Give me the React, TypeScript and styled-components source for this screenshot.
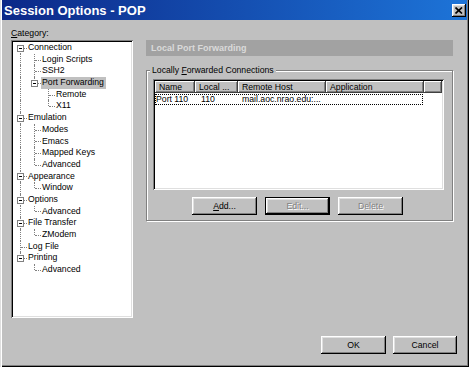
import React from 'react';
import styled, { createGlobalStyle, css } from 'styled-components';

const GlobalStyle = createGlobalStyle`
  html, body {
    margin: 0;
    padding: 0;
    background: #c0c0c0;
  }
  body {
    font-family: "Liberation Sans", Arial, sans-serif;
    font-size: 8.7px;
    color: #000;
  }
`;

const raised = css`
  box-shadow: inset -1px -1px 0 #000, inset 1px 1px 0 #fff,
    inset -2px -2px 0 #808080, inset 2px 2px 0 #dfdfdf;
`;

const sunken = css`
  box-shadow: inset 1px 1px 0 #808080, inset -1px -1px 0 #fff,
    inset 2px 2px 0 #000, inset -2px -2px 0 #dfdfdf;
`;

const Window = styled.div`
    width: 469px;
    height: 367px;
    box-sizing: border-box;
    padding: 0 2px 2px 2px;
    display: flex;
    flex-direction: column;
    background: #c0c0c0;
    box-shadow: inset 1px 0 0 #dfdfdf, inset 2px 0 0 #fff,
        inset -1px -1px 0 #000, inset -2px -2px 0 #808080;
    overflow: hidden;
`;

const TitleBar = styled.div`
    height: 20px;
    display: flex;
    align-items: center;
    padding: 0 1px 0 2px;
    background: linear-gradient(to right, #0c2888, #1d74d8);
    color: #fff;
    font-size: 13px;
    font-weight: bold;
`;

const CloseButton = styled.div`
    margin-left: auto;
    width: 14px;
    height: 13px;
    background: #c0c0c0;
    display: flex;
    align-items: center;
    justify-content: center;
    ${raised};
`;

const Main = styled.div`
    display: flex;
    padding: 6px 0 0 9px;
`;

const LeftCol = styled.div`
    width: 122px;
    display: flex;
    flex-direction: column;
`;

const FieldLabel = styled.div`
    height: 14px;
    line-height: 14px;
`;

const Tree = styled.div`
    height: 278px;
    box-sizing: border-box;
    padding: 2px;
    background: #fff;
    ${sunken};
`;

const TreeRow = styled.div`
    display: flex;
    height: 11.7px;
    line-height: 11.7px;
    white-space: nowrap;
`;

const Guide = styled.div<{ $line: boolean }>`
    position: relative;
    width: 14px;
    flex: none;
    ${p => p.$line && css`
        &::before {
            content: '';
            position: absolute;
            left: 7px;
            top: 0;
            bottom: 0;
            border-left: 1px dotted #808080;
        }
    `}
`;

const Connector = styled.div<{ $up: boolean; $down: boolean }>`
    position: relative;
    width: 14px;
    flex: none;
    &::before {
        content: '';
        position: absolute;
        left: 7px;
        top: ${p => (p.$up ? '0' : '50%')};
        bottom: ${p => (p.$down ? '0' : '50%')};
        border-left: 1px dotted #808080;
    }
    &::after {
        content: '';
        position: absolute;
        left: 8px;
        right: 0;
        top: 50%;
        border-top: 1px dotted #808080;
    }
`;

const Expander = styled.div`
    position: absolute;
    z-index: 1;
    left: 4px;
    top: calc(50% - 3px);
    width: 7px;
    height: 7px;
    box-sizing: border-box;
    border: 1px solid #808080;
    background: #fff;
    &::after {
        content: '';
        position: absolute;
        left: 1px;
        top: 2px;
        width: 3px;
        border-top: 1px solid #000;
    }
`;

const TreeLabel = styled.span<{ $selected?: boolean }>`
    padding: 0 2px 0 1px;
    background: ${p => (p.$selected ? '#c0c0c0' : 'transparent')};
`;

const RightCol = styled.div`
    width: 307px;
    margin-left: 13px;
    padding-top: 14px;
`;

const PanelHeader = styled.div`
    height: 16px;
    line-height: 16px;
    padding-left: 5px;
    background: #a2a2a2;
    color: #dadada;
    font-size: 9px;
    font-weight: bold;
`;

const Group = styled.fieldset`
    margin: 8px 0 0 0;
    padding: 3px 8px 5px 6px;
    min-width: 0;
    border: 1px solid #808080;
    box-shadow: inset 1px 1px 0 #fff, 1px 1px 0 #fff;
`;

const Legend = styled.legend`
    padding: 0 2px;
    margin-left: -3px;
    line-height: 12px;
    background: #c0c0c0;
`;

const ListView = styled.div`
    height: 111px;
    box-sizing: border-box;
    padding: 2px;
    background: #fff;
    display: flex;
    flex-direction: column;
    ${sunken};
`;

const ListHeader = styled.div`
    display: flex;
    height: 12px;
    flex: none;
`;

const HeaderCell = styled.div<{ $w?: number }>`
    ${p => (p.$w ? `width: ${p.$w}px; flex: none;` : 'flex: 1;')}
    box-sizing: border-box;
    padding-left: 4px;
    line-height: 12px;
    background: #c0c0c0;
    white-space: nowrap;
    overflow: hidden;
    box-shadow: inset -1px -1px 0 #404040, inset 1px 1px 0 #fff,
        inset -2px -2px 0 #808080;
`;

const ListRow = styled.div`
    display: flex;
    width: 268px;
    height: 11px;
    line-height: 11px;
    margin: 1px 0 0 0;
    outline: 1px dotted #000;
    outline-offset: -1px;
`;

const RowCell = styled.div<{ $w: number; $pad: number }>`
    width: ${p => p.$w}px;
    padding-left: ${p => p.$pad}px;
    box-sizing: border-box;
    white-space: nowrap;
    overflow: hidden;
`;

const ButtonRow = styled.div`
    display: flex;
    justify-content: center;
    gap: 8px;
    margin-top: 7px;
    padding-right: 2px;
`;

const Button = styled.button<{ $default?: boolean }>`
    width: 65px;
    height: 18px;
    padding: 0;
    border: ${p => (p.$default ? '1px solid #000' : 'none')};
    background: #c0c0c0;
    font-family: inherit;
    font-size: 8.7px;
    color: #000;
    ${raised};
    &:disabled {
        color: #808080;
        text-shadow: 1px 1px 0 #fff;
    }
`;

const Footer = styled.div`
    flex: 1;
    display: flex;
    justify-content: flex-end;
    align-items: flex-end;
    gap: 7px;
    padding: 0 10px 11px 0;
`;

type Node = { label: string; selected?: boolean; children?: Node[] };

const tree: Node[] = [
    {
        label: 'Connection',
        children: [
            { label: 'Login Scripts' },
            { label: 'SSH2' },
            { label: 'Port Forwarding', selected: true, children: [{ label: 'Remote' }, { label: 'X11' }] },
        ],
    },
    { label: 'Emulation', children: [{ label: 'Modes' }, { label: 'Emacs' }, { label: 'Mapped Keys' }, { label: 'Advanced' }] },
    { label: 'Appearance', children: [{ label: 'Window' }] },
    { label: 'Options', children: [{ label: 'Advanced' }] },
    { label: 'File Transfer', children: [{ label: 'ZModem' }] },
    { label: 'Log File' },
    { label: 'Printing', children: [{ label: 'Advanced' }] },
];

const renderTree = (nodes: Node[], guides: boolean[], out: React.ReactNode[], root: boolean) => {
    nodes.forEach((n, i) => {
        const hasNext = i < nodes.length - 1;
        out.push(
            <TreeRow key={out.length}>
                {guides.map((g, j) => <Guide key={j} $line={g} />)}
                <Connector $up={!(root && i == 0)} $down={hasNext}>
                    {n.children && <Expander />}
                </Connector>
                <TreeLabel $selected={n.selected}>{n.label}</TreeLabel>
            </TreeRow>
        );
        if (n.children) renderTree(n.children, [...guides, hasNext], out, false);
    });
    return out;
};

const columns = [
    { name: 'Name', w: 40 },
    { name: 'Local ...', w: 43 },
    { name: 'Remote Host', w: 88 },
    { name: 'Application', w: 98 },
];

const App = () => {
    const rows = renderTree(tree, [], [], true);

    return (
        <>
            <GlobalStyle />
            <Window>
                <TitleBar>
                    Session Options - POP
                    <CloseButton>
                        <svg width="8" height="7" viewBox="0 0 8 7">
                            <path d="M0.5 0.5 L7 6.5 M7 0.5 L0.5 6.5" stroke="#000" strokeWidth="1.7" />
                        </svg>
                    </CloseButton>
                </TitleBar>
                <Main>
                    <LeftCol>
                        <FieldLabel><u>C</u>ategory:</FieldLabel>
                        <Tree>{rows}</Tree>
                    </LeftCol>
                    <RightCol>
                        <PanelHeader>Local Port Forwarding</PanelHeader>
                        <Group>
                            <Legend>Locally <u>F</u>orwarded Connections</Legend>
                            <ListView>
                                <ListHeader>
                                    {columns.map(c => <HeaderCell key={c.name} $w={c.w}>{c.name}</HeaderCell>)}
                                    <HeaderCell />
                                </ListHeader>
                                <ListRow>
                                    <RowCell $w={40} $pad={1}>Port 110</RowCell>
                                    <RowCell $w={43} $pad={6}>110</RowCell>
                                    <RowCell $w={88} $pad={4}>mail.aoc.nrao.edu:...</RowCell>
                                    <RowCell $w={97} $pad={4}></RowCell>
                                </ListRow>
                            </ListView>
                            <ButtonRow>
                                <Button><u>A</u>dd...</Button>
                                <Button $default disabled>Edit...</Button>
                                <Button disabled>Delete</Button>
                            </ButtonRow>
                        </Group>
                    </RightCol>
                </Main>
                <Footer>
                    <Button>OK</Button>
                    <Button style={{ width: 64 }}>Cancel</Button>
                </Footer>
            </Window>
        </>
    );
};

export default App;
